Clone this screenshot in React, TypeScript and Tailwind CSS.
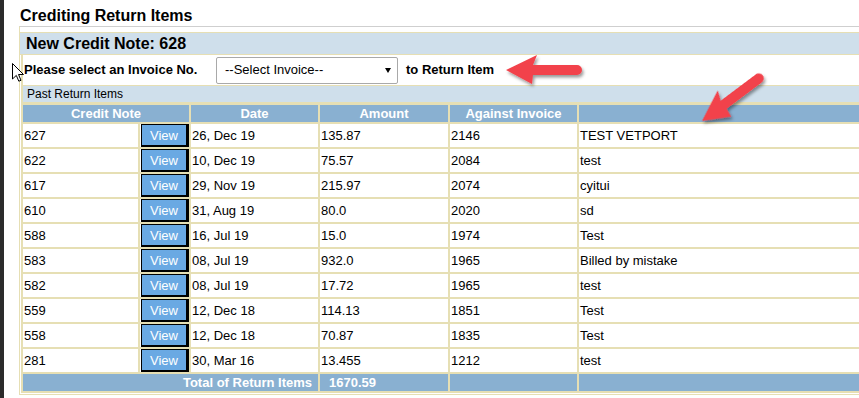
import React from 'react';

type Row = {
    note: string;
    date: string;
    amount: string;
    invoice: string;
    remark: string;
};

const rows: Row[] = [
    { note: '627', date: '26, Dec 19', amount: '135.87', invoice: '2146', remark: 'TEST VETPORT' },
    { note: '622', date: '10, Dec 19', amount: '75.57', invoice: '2084', remark: 'test' },
    { note: '617', date: '29, Nov 19', amount: '215.97', invoice: '2074', remark: 'cyitui' },
    { note: '610', date: '31, Aug 19', amount: '80.0', invoice: '2020', remark: 'sd' },
    { note: '588', date: '16, Jul 19', amount: '15.0', invoice: '1974', remark: 'Test' },
    { note: '583', date: '08, Jul 19', amount: '932.0', invoice: '1965', remark: 'Billed by mistake' },
    { note: '582', date: '08, Jul 19', amount: '17.72', invoice: '1965', remark: 'test' },
    { note: '559', date: '12, Dec 18', amount: '114.13', invoice: '1851', remark: 'Test' },
    { note: '558', date: '12, Dec 18', amount: '70.87', invoice: '1835', remark: 'Test' },
    { note: '281', date: '30, Mar 16', amount: '13.455', invoice: '1212', remark: 'test' },
];

// red callout arrow, tip at origin pointing left
const arrowPath = 'M0,0 L31,-15 L27,-5 L71,-5 A5,5 0 0 1 71,5 L27,5 L26,14 Z';

const Annotations = () => (
    <svg className="pointer-events-none absolute left-0 top-0" width={859} height={398}>
        <defs>
            <filter id="shadow" x="-20%" y="-20%" width="140%" height="160%">
                <feDropShadow dx="1.5" dy="2.5" stdDeviation="1.5" floodColor="#000" floodOpacity="0.4" />
            </filter>
        </defs>
        <g filter="url(#shadow)" fill="#f2424b">
            <path d={arrowPath} transform="translate(506,70)" />
            <path d={arrowPath} transform="translate(702,121) rotate(-36.87)" />
        </g>
        <path
            d="M12.5,63.5 L12.5,79 L16.3,75.4 L18.8,81.2 L21,80.3 L18.5,74.5 L23.5,74.5 Z"
            fill="#fff"
            stroke="#000"
            strokeWidth={1}
            strokeLinejoin="round"
        />
    </svg>
);

export default function App() {
    return (
        <div className="relative flex h-[398px] w-[859px] overflow-hidden bg-white font-['Liberation_Sans',Arial,sans-serif] text-[13px] text-black">
            <div className="w-1 shrink-0 bg-[#2b2b2b]" />

            <div className="min-w-0 flex-1">
                <h1 className="h-[26px] pl-4 pt-[7px] text-[16px] font-bold leading-[18px]">Crediting Return Items</h1>

                <div className="ml-[15px] w-[900px] border-l border-t border-l-[#e6dfb4] border-t-[#cfcfcf] pt-[5px]">
                    <div className="h-[23px] border-y border-[#e6dfb4] bg-[#cfdfeb] pl-[6px] text-[16px] font-bold leading-[21px]">
                        New Credit Note: 628
                    </div>

                    <div className="ml-[1px] flex h-[31px] items-center border-b border-l-2 border-[#e6dfb4] pl-[1px]">
                        <span className="w-[192px] font-bold">Please select an Invoice No.</span>
                        <div className="flex h-[27px] w-[182px] items-center justify-between rounded-[2px] border border-[#a9a9a9] bg-white pl-2 pr-[6px]">
                            <span>--Select Invoice--</span>
                            <svg width="6" height="5" viewBox="0 0 6 5">
                                <polygon points="0,0 6,0 3,5" fill="#000" />
                            </svg>
                        </div>
                        <span className="ml-2 font-bold">to Return Item</span>
                    </div>

                    <div className="ml-[1px] h-[17px] border-b border-l-2 border-[#e6dfb4] bg-[#cfdfeb] pl-1 text-[12px] leading-[16px]">
                        Past Return Items
                    </div>

                    <table className="ml-[1px] w-[880px] table-fixed border-separate border-spacing-[2px] bg-[#e6dfb4]">
                        <colgroup>
                            <col className="w-[115px]" />
                            <col className="w-[49px]" />
                            <col className="w-[127px]" />
                            <col className="w-[128px]" />
                            <col className="w-[127px]" />
                            <col />
                        </colgroup>
                        <thead>
                            <tr className="h-[17px] bg-[#89b0d1] font-bold leading-[15px] text-white">
                                <th colSpan={2} className="p-0 text-center">Credit Note</th>
                                <th className="p-0 text-center">Date</th>
                                <th className="p-0 text-center">Amount</th>
                                <th className="p-0 text-center">Against Invoice</th>
                                <th className="p-0" />
                            </tr>
                        </thead>
                        <tbody>
                            {rows.map((r) => (
                                <tr key={r.note} className="h-[23px] bg-white leading-[15px]">
                                    <td className="px-[1px] py-0">{r.note}</td>
                                    <td className="py-0 pl-[1px] pr-0">
                                        <button className="flex h-[23px] w-[48px] items-center justify-center border-b-[2px] border-l border-r-[3px] border-t border-black bg-[#6aa9e3] text-[13px] text-white">
                                            View
                                        </button>
                                    </td>
                                    <td className="px-[1px] py-0">{r.date}</td>
                                    <td className="px-[1px] py-0">{r.amount}</td>
                                    <td className="px-[1px] py-0">{r.invoice}</td>
                                    <td className="px-[1px] py-0">{r.remark}</td>
                                </tr>
                            ))}
                            <tr className="h-[17px] bg-[#89b0d1] font-bold leading-[15px] text-white">
                                <td colSpan={3} className="py-0 pl-0 pr-[6px] text-right">Total of Return Items</td>
                                <td className="py-0 pl-[9px]">1670.59</td>
                                <td className="p-0" />
                                <td className="p-0" />
                            </tr>
                        </tbody>
                    </table>
                    <div className="mt-[1px] border-t border-[#e6dfb4]" />
                </div>
            </div>

            <Annotations />
        </div>
    );
}
